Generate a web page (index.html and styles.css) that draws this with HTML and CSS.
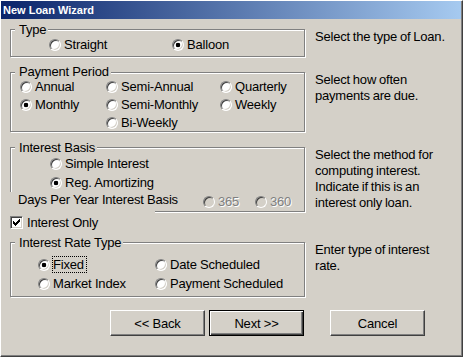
FILE: index.html
```html
<!DOCTYPE html>
<html>
<head>
<meta charset="utf-8">
<title>New Loan Wizard</title>
<link rel="stylesheet" href="styles.css">
</head>
<body>
<div class="window">
  <div class="titlebar">New Loan Wizard</div>
  <div class="client">

    <div class="row row-type">
      <div class="group g-type">
        <div class="legend">Type</div>
        <div class="opts-type">
          <div class="opt col-straight"><span class="radio"></span><span>Straight</span></div>
          <div class="opt"><span class="radio on"></span><span>Balloon</span></div>
        </div>
      </div>
      <p class="desc">Select the type of Loan.</p>
    </div>

    <div class="row row-pay">
      <div class="group g-pay">
        <div class="legend legend-pay">Payment Period</div>
        <div class="opts-pay">
          <div class="opt"><span class="radio"></span><span>Annual</span></div>
          <div class="opt"><span class="radio"></span><span>Semi-Annual</span></div>
          <div class="opt"><span class="radio"></span><span>Quarterly</span></div>
          <div class="opt"><span class="radio on"></span><span>Monthly</span></div>
          <div class="opt"><span class="radio"></span><span>Semi-Monthly</span></div>
          <div class="opt"><span class="radio"></span><span>Weekly</span></div>
          <div class="opt col2"><span class="radio"></span><span>Bi-Weekly</span></div>
        </div>
      </div>
      <p class="desc">Select how often<br>payments are due.</p>
    </div>

    <div class="row row-basis">
      <div class="left">
        <div class="group g-basis">
          <div class="legend">Interest Basis</div>
          <div class="opts-basis">
            <div class="opt"><span class="radio"></span><span>Simple Interest</span></div>
            <div class="opt"><span class="radio on"></span><span>Reg. Amortizing</span></div>
          </div>
          <div class="days-row">
            <div class="days-label">Days Per Year Interest Basis</div>
            <div class="opt opt-365"><span class="radio dis"></span><span class="dis-text">365</span></div>
            <div class="opt"><span class="radio dis"></span><span class="dis-text">360</span></div>
          </div>
        </div>
        <div class="check-row">
          <span class="checkbox"><svg width="7" height="7" viewBox="0 0 7 7" shape-rendering="crispEdges"><path d="M0 2h1v3h-1z M1 3h1v3h-1z M2 4h1v3h-1z M3 3h1v3h-1z M4 2h1v3h-1z M5 1h1v3h-1z M6 0h1v3h-1z" fill="#000"/></svg></span>
          <span>Interest Only</span>
        </div>
      </div>
      <p class="desc">Select the method for<br>computing interest.<br>Indicate if this is an<br>interest only loan.</p>
    </div>

    <div class="row row-rate">
      <div class="group g-rate">
        <div class="legend">Interest Rate Type</div>
        <div class="opts-rate">
          <div class="opt"><span class="radio on"></span><span class="focus">Fixed</span></div>
          <div class="opt"><span class="radio"></span><span>Date Scheduled</span></div>
          <div class="opt"><span class="radio"></span><span>Market Index</span></div>
          <div class="opt"><span class="radio"></span><span>Payment Scheduled</span></div>
        </div>
      </div>
      <p class="desc">Enter type of interest<br>rate.</p>
    </div>

    <div class="buttons">
      <button class="btn">&lt;&lt; Back</button>
      <button class="btn default btn-next">Next &gt;&gt;</button>
      <button class="btn btn-cancel">Cancel</button>
    </div>

  </div>
</div>
</body>
</html>
```
FILE: styles.css
```css
* { box-sizing: border-box; }

body {
  margin: 0;
  background: #d4d0c8;
  font-family: "Liberation Sans", Arial, sans-serif;
  font-size: 13px;
  letter-spacing: -0.2px;
  color: #000;
}

.window {
  width: 463px;
  height: 357px;
  border-left: 1px solid #fff;
  border-top: 1px solid #fff;
  border-right: 1px solid #404040;
  border-bottom: 1px solid #404040;
  box-shadow: inset -1px -1px 0 #808080;
  padding: 0 1px 1px 0;
}

.titlebar {
  height: 18px;
  background: linear-gradient(to right, #0a246a, #a6caf0);
  color: #fff;
  font-weight: bold;
  font-size: 11px;
  letter-spacing: 0;
  line-height: 17px;
  padding: 1px 0 0 2px;
}

.client {
  padding-left: 9px;
}

.row {
  display: flex;
  align-items: flex-start;
}

.row-type { margin-top: 10px; }
.row-pay { margin-top: 15px; }
.row-basis { margin-top: 15px; }
.row-rate { margin-top: 12px; }

.group {
  flex: none;
  width: 295px;
  border: 1px solid #808080;
  box-shadow: 1px 1px 0 #fff, inset 1px 1px 0 #fff;
}

.g-type { height: 28px; }
.g-pay { height: 60px; }
.g-basis { height: 65px; }
.g-rate { height: 55px; }

.legend {
  width: fit-content;
  height: 13px;
  margin: -7px 0 0 4px;
  padding: 0 2px 0 4px;
  background: #d4d0c8;
  line-height: 13px;
}

.legend-pay {
  margin-top: -8px;
}

.opt {
  display: flex;
  align-items: center;
  height: 15px;
  line-height: 15px;
  white-space: nowrap;
}

.radio {
  flex: none;
  width: 12px;
  height: 12px;
  margin-right: 3px;
  border-radius: 50%;
  border: 1px solid;
  border-color: #808080 #fff #fff #808080;
  background: #fff;
  box-shadow: inset 1px 1px 0 #404040, inset -1px -1px 0 #d4d0c8;
}

.radio.on {
  background: radial-gradient(circle at 50% 50%, #000 0, #000 2px, #fff 2.6px);
}

.radio.dis {
  background: #d4d0c8;
}

.dis-text {
  color: #808080;
  text-shadow: 1px 1px 0 #fff;
}

.opts-type {
  display: flex;
  margin: 1px 0 0 38px;
}

.col-straight { width: 123px; }

.opts-pay {
  display: grid;
  grid-template-columns: 86px 114px auto;
  grid-auto-rows: 13px;
  row-gap: 5px;
  margin: 2px 0 0 9px;
}

.opts-pay .opt {
  height: 13px;
  line-height: 13px;
}

.col2 { grid-column: 2; }

.opts-basis {
  display: flex;
  flex-direction: column;
  gap: 4px;
  margin: 2px 0 0 39px;
}

.days-row {
  display: flex;
  align-items: flex-start;
  margin-top: 2px;
}

.days-label {
  flex: none;
  width: 145px;
  height: 21px;
  margin-left: -1px;
  padding-left: 8px;
  line-height: 15px;
  background: #d4d0c8;
  white-space: nowrap;
}

.days-row .opt {
  margin-top: 2px;
}

.opt-365 {
  margin-left: 48px;
  width: 52px;
}

.check-row {
  display: flex;
  align-items: center;
  height: 15px;
  line-height: 15px;
  margin-top: 3px;
}

.checkbox {
  flex: none;
  display: flex;
  align-items: center;
  justify-content: center;
  width: 13px;
  height: 13px;
  margin-right: 4px;
  background: #fff;
  border: 1px solid;
  border-color: #808080 #fff #fff #808080;
  box-shadow: inset 1px 1px 0 #404040, inset -1px -1px 0 #d4d0c8;
}

.checkbox svg { display: block; }

.opts-rate {
  display: grid;
  grid-template-columns: 117px auto;
  row-gap: 4px;
  margin: 8px 0 0 27px;
}

.focus {
  outline: 1px dotted #000;
  padding-right: 2px;
}

.desc {
  margin: 0 0 0 10px;
  line-height: 16px;
  white-space: nowrap;
  word-spacing: -0.5px;
}

.buttons {
  display: flex;
  margin-top: 13px;
  padding-left: 100px;
}

.btn {
  width: 95px;
  height: 26px;
  padding: 0;
  font: inherit;
  letter-spacing: -0.2px;
  color: #000;
  background: #d4d0c8;
  border: 1px solid;
  border-color: #fff #404040 #404040 #fff;
  box-shadow: inset -1px -1px 0 #808080;
}

.btn.default {
  border-color: #000;
  box-shadow: inset 1px 1px 0 #fff, inset -1px -1px 0 #404040, inset -2px -2px 0 #808080;
}

.btn-next { margin-left: 4px; }
.btn-cancel { margin-left: 26px; }
```
